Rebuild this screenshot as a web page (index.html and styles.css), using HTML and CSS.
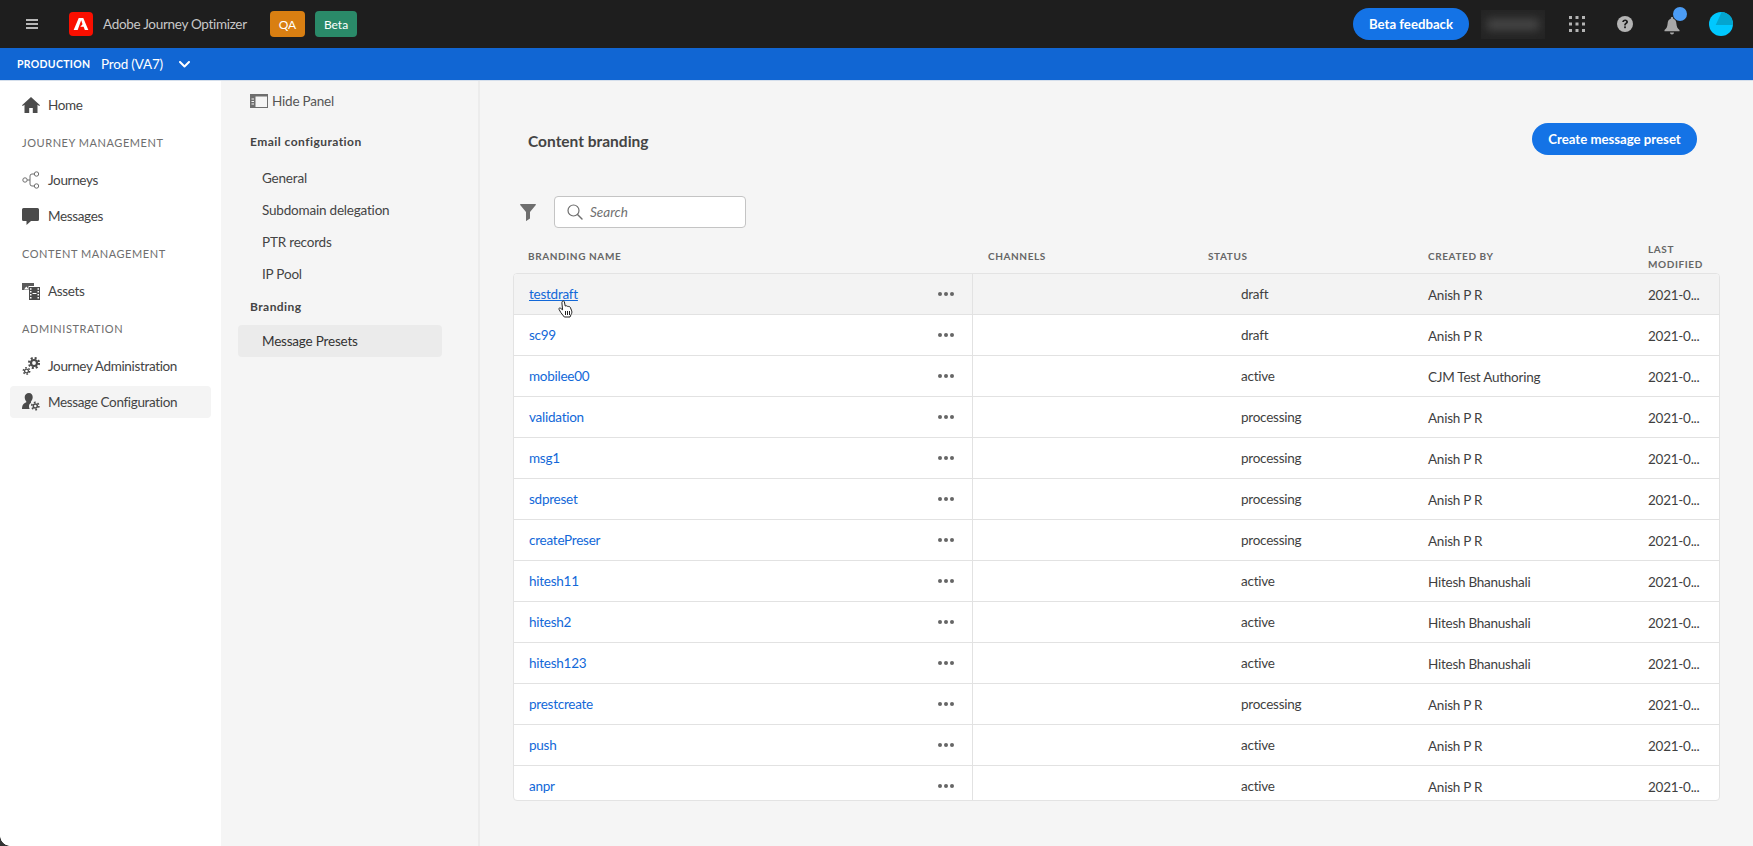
FILE: index.html
```html
<!DOCTYPE html>
<html lang="en">
<head>
<meta charset="utf-8">
<title>Adobe Journey Optimizer</title>
<link rel="stylesheet" href="styles.css">
</head>
<body>
<header class="topbar">
  <svg class="burger" viewBox="0 0 12 10" width="12" height="10"><path d="M0 0h12v2H0zM0 4h12v2H0zM0 8h12v2H0z" fill="#b8b8b8"/></svg>
  <div class="logo"><svg viewBox="0 0 24 24" width="16" height="16"><path d="M8.600 3h6.800L23 21h-5.200l-1.900-5h-5l3.400-3.600-2-6.100L7 21H1z" fill="#fff"/></svg></div>
  <span class="appname">Adobe Journey Optimizer</span>
  <span class="tag tag-qa">QA</span>
  <span class="tag tag-beta">Beta</span>
  <span class="spacer"></span>
  <button class="pill feedback">Beta feedback</button>
  <div class="blurred"><div class="blurred-ink"></div></div>
  <svg class="ic-apps" viewBox="0 0 16 16" width="16" height="16"><g fill="#b4b4b4"><rect width="3" height="3"/><rect x="6.500" width="3" height="3"/><rect x="13" width="3" height="3"/><rect y="6.500" width="3" height="3"/><rect x="6.500" y="6.500" width="3" height="3"/><rect x="13" y="6.500" width="3" height="3"/><rect y="13" width="3" height="3"/><rect x="6.500" y="13" width="3" height="3"/><rect x="13" y="13" width="3" height="3"/></g></svg>
  <svg class="ic-help" viewBox="0 0 16 16" width="16" height="16"><circle cx="8" cy="8" r="8" fill="#b4b4b4"/><path d="M5.200 6.100C5.300 4.400 6.500 3.400 8.200 3.400c1.700 0 2.800 1 2.800 2.300 0 1-.5 1.600-1.300 2.200-.7.500-.9.800-.9 1.500H7.200c-.1-1.100.3-1.800 1-2.300.6-.5.9-.8.9-1.300 0-.5-.4-.9-1-.9-.7 0-1.100.4-1.200 1.200z" fill="#1e1e1e"/><rect x="7.100" y="10.300" width="1.800" height="1.900" rx=".4" fill="#1e1e1e"/></svg>
  <div class="bell-wrap">
    <svg viewBox="0 0 16 18" width="16" height="18"><path d="M8 0c.7 0 1.200.5 1.200 1.200v.6c2.300.6 3 2.600 3.200 5 .3 3 1 4.800 3.100 6.200v1.300H.5V13c2.100-1.400 2.800-3.200 3.100-6.200.2-2.400.9-4.400 3.200-5v-.6C6.800.5 7.300 0 8 0zM6 15.500h4c0 1.300-.8 2-2 2s-2-.7-2-2z" fill="#a8a8a8"/></svg>
    <span class="bell-dot"></span>
  </div>
  <svg class="avatar" viewBox="0 0 24 24" width="24" height="24"><circle cx="12" cy="12" r="12" fill="#00c8ff"/><path d="M6.700 13L12.700 0A12 12 0 0 1 24 13z" fill="#04a5cf"/></svg>
</header>
<div class="orgbar">
  <span class="org-label">PRODUCTION</span>
  <span class="org-name">Prod (VA7)</span>
  <svg viewBox="0 0 11 7" width="11" height="7"><path d="M1 1l4.500 4.500L10 1" fill="none" stroke="#fff" stroke-width="2" stroke-linecap="round" stroke-linejoin="round"/></svg>
</div>
<div class="shell">
  <nav class="sidenav">
    <a class="nav-item"><svg class="nav-ic" viewBox="0 0 18 16" width="18" height="16"><path d="M9 0l9 8.200-.8.900L15.500 7.700V16h-4.700v-5H7.200v5H2.500V7.700L.8 9.100 0 8.200z" fill="#4b4b4b"/></svg>Home</a>
    <div class="nav-head">JOURNEY MANAGEMENT</div>
    <a class="nav-item"><svg class="nav-ic" viewBox="0 0 18 18" width="18" height="18"><g fill="none" stroke="#6e6e6e" stroke-width="1"><circle cx="3" cy="9" r="2.200"/><circle cx="14.500" cy="3" r="2.200"/><circle cx="14.500" cy="15" r="2.200"/><path d="M5.200 9H8M12.300 3H10a2 2 0 0 0-2 2v8a2 2 0 0 0 2 2h2.300"/></g></svg>Journeys</a>
    <a class="nav-item"><svg class="nav-ic" viewBox="0 0 18 17" width="18" height="17"><path d="M1.500 0h14A1.500 1.500 0 0 1 17 1.500v10a1.500 1.500 0 0 1-1.500 1.500H9l-4.500 4V13h-3A1.500 1.500 0 0 1 0 11.500v-10A1.500 1.500 0 0 1 1.500 0z" fill="#4b4b4b"/></svg>Messages</a>
    <div class="nav-head">CONTENT MANAGEMENT</div>
    <a class="nav-item"><svg class="nav-ic" viewBox="0 0 18 17" width="18" height="17"><path d="M0 0h12v3H6.500v4H0z" fill="#5a5a5a"/><path d="M2 6.500l2.300-3 1.700 2v1z" fill="#fff"/><path d="M7 4h11v13H7z" fill="#4b4b4b"/><path d="M8 5.200h1.500v1.600H8zM15.500 5.200H17v1.600h-1.500zM8 8h1.500v1.600H8zM15.500 8H17v1.600h-1.500zM8 11h1.500v1.600H8zM15.500 11H17v1.600h-1.500zM8 14h1.500v1.600H8zM15.500 14H17v1.600h-1.500zM10.500 10h4v1h-4z" fill="#fff"/></svg>Assets</a>
    <div class="nav-head">ADMINISTRATION</div>
    <a class="nav-item"><svg class="nav-ic" viewBox="0 0 18 18" width="18" height="18"><g fill="none" stroke="#4b4b4b"><circle cx="12" cy="6" r="3" stroke-width="2.200"/><circle cx="12" cy="6" r="5" stroke-width="2.200" stroke-dasharray="2 1.930"/><circle cx="4.500" cy="14" r="1.900" stroke-width="1.300"/><circle cx="4.500" cy="14" r="3.200" stroke-width="1.500" stroke-dasharray="1.600 1.750"/></g></svg>Journey Administration</a>
    <a class="nav-item is-current"><svg class="nav-ic" viewBox="0 0 18 18" width="18" height="18"><path d="M7 0c2.300 0 3.700 1.800 3.700 4.100 0 1.700-.7 3.300-1.700 4.300v1.400c-1.300.8-2 2-2 3.700 0 .9.200 1.700.7 2.500H0c0-3.300.8-5 2.800-6.100l1.500-.7V8.400C3.300 7.400 2.700 5.800 2.700 4.100 2.700 1.800 4.500 0 7 0z" fill="#4b4b4b"/><g fill="none" stroke="#4b4b4b"><circle cx="13.300" cy="13" r="2" stroke-width="1.500"/><circle cx="13.300" cy="13" r="3.600" stroke-width="1.600" stroke-dasharray="1.800 1.970"/></g></svg>Message Configuration</a>
  </nav>
  <aside class="panel">
    <div class="hide-panel"><svg viewBox="0 0 18 14" width="18" height="14"><rect x=".5" y=".5" width="17" height="13" fill="none" stroke="#6e6e6e"/><path d="M0 0h18v2.500H0zM0 0h5.500v14H0z" fill="#6e6e6e"/><path d="M1.500 4.500h2.500v1H1.500zM1.500 7h2.500v1H1.500zM1.500 9.500h2.500v1H1.500z" fill="#f5f5f5"/></svg>Hide Panel</div>
    <div class="panel-head panel-head-first">Email configuration</div>
    <a class="panel-item">General</a>
    <a class="panel-item">Subdomain delegation</a>
    <a class="panel-item">PTR records</a>
    <a class="panel-item">IP Pool</a>
    <div class="panel-head">Branding</div>
    <a class="panel-item is-current">Message Presets</a>
  </aside>
  <main class="content">
    <div class="title-row">
      <h1>Content branding</h1>
      <button class="pill create">Create message preset</button>
    </div>
    <div class="filter-row">
      <svg class="filter-ic" viewBox="0 0 16 17" width="16" height="17"><path d="M.5 0h15l.5.800L10 8v6.500L6.200 17H6V8L0 .8z" fill="#6e6e6e"/></svg>
      <div class="search">
        <svg viewBox="0 0 16 16" width="16" height="16"><circle cx="6.500" cy="6.500" r="5.500" fill="none" stroke="#6e6e6e" stroke-width="1.200"/><path d="M10.500 10.500L15 15" stroke="#6e6e6e" stroke-width="1.400" stroke-linecap="round"/></svg>
        <span>Search</span>
      </div>
    </div>
    <div class="thead">
      <div class="th">BRANDING NAME</div>
      <div class="th">CHANNELS</div>
      <div class="th">STATUS</div>
      <div class="th">CREATED BY</div>
      <div class="th">LAST<br>MODIFIED</div>
    </div>
    <div class="table">
      <div class="row is-hover"><a class="name"><span>testdraft</span><i class="dots"></i></a><div class="chan"></div><div class="status">draft</div><div class="by">Anish P R</div><div class="mod">2021-0...</div></div>
      <div class="row"><a class="name"><span>sc99</span><i class="dots"></i></a><div class="chan"></div><div class="status">draft</div><div class="by">Anish P R</div><div class="mod">2021-0...</div></div>
      <div class="row"><a class="name"><span>mobilee00</span><i class="dots"></i></a><div class="chan"></div><div class="status">active</div><div class="by">CJM Test Authoring</div><div class="mod">2021-0...</div></div>
      <div class="row"><a class="name"><span>validation</span><i class="dots"></i></a><div class="chan"></div><div class="status">processing</div><div class="by">Anish P R</div><div class="mod">2021-0...</div></div>
      <div class="row"><a class="name"><span>msg1</span><i class="dots"></i></a><div class="chan"></div><div class="status">processing</div><div class="by">Anish P R</div><div class="mod">2021-0...</div></div>
      <div class="row"><a class="name"><span>sdpreset</span><i class="dots"></i></a><div class="chan"></div><div class="status">processing</div><div class="by">Anish P R</div><div class="mod">2021-0...</div></div>
      <div class="row"><a class="name"><span>createPreser</span><i class="dots"></i></a><div class="chan"></div><div class="status">processing</div><div class="by">Anish P R</div><div class="mod">2021-0...</div></div>
      <div class="row"><a class="name"><span>hitesh11</span><i class="dots"></i></a><div class="chan"></div><div class="status">active</div><div class="by">Hitesh Bhanushali</div><div class="mod">2021-0...</div></div>
      <div class="row"><a class="name"><span>hitesh2</span><i class="dots"></i></a><div class="chan"></div><div class="status">active</div><div class="by">Hitesh Bhanushali</div><div class="mod">2021-0...</div></div>
      <div class="row"><a class="name"><span>hitesh123</span><i class="dots"></i></a><div class="chan"></div><div class="status">active</div><div class="by">Hitesh Bhanushali</div><div class="mod">2021-0...</div></div>
      <div class="row"><a class="name"><span>prestcreate</span><i class="dots"></i></a><div class="chan"></div><div class="status">processing</div><div class="by">Anish P R</div><div class="mod">2021-0...</div></div>
      <div class="row"><a class="name"><span>push</span><i class="dots"></i></a><div class="chan"></div><div class="status">active</div><div class="by">Anish P R</div><div class="mod">2021-0...</div></div>
      <div class="row row-last"><a class="name"><span>anpr</span><i class="dots"></i></a><div class="chan"></div><div class="status">active</div><div class="by">Anish P R</div><div class="mod">2021-0...</div></div>
      <svg class="cursor" viewBox="0 0 16 18" width="16" height="18"><path d="M4.500 1.200c.8-.7 1.700-.2 1.900.7l.8 4.100 1-.2c.5-.1 1 .1 1.200.5.500-.2 1.100-.1 1.400.4.600-.2 1.200 0 1.500.6l1.400 3.600c.4 1.300.1 2.600-.6 3.600L12 17H6.300L2.800 12.500 1 9.300c-.4-.8.500-1.700 1.300-1.200l2.300 1.700L3.900 2.800c0-.6.200-1.200.6-1.600z" fill="#fff" stroke="#222" stroke-width="1"/><path d="M7.500 11v4M9.500 11v4M11.500 11v4" stroke="#222" stroke-width="1"/></svg>
    </div>
  </main>
</div>
<div class="window-corner"></div>
</body>
</html>
```
FILE: styles.css
```css
* { box-sizing: border-box; }
html, body { margin: 0; height: 100%; overflow: hidden; }
body { font-family: "Lato", "Noto Sans", sans-serif; font-size: 13.5px; color: #2c2c2c; background: #f5f5f5; }
a { color: inherit; text-decoration: none; }
button { font-family: inherit; border: 0; }

.topbar { height: 48px; background: #1e1e1e; display: flex; align-items: center; padding-left: 26px; color: #d0d0d0; }
.burger { margin-right: 31px; }
.logo { width: 24px; height: 24px; border-radius: 4px; background: #fa0f00; display: flex; align-items: center; justify-content: center; margin-right: 10px; }
.appname { font-size: 13.5px; letter-spacing: -.3px; color: #c8c8c8; margin-right: 23px; width: 144px; white-space: nowrap; }
.tag { height: 26px; border-radius: 4px; color: #fff; font-size: 12px; display: flex; align-items: center; justify-content: center; }
.tag-qa { width: 35px; background: #d97f12; margin-right: 10px; }
.tag-beta { width: 42px; background: #2a8a69; }
.spacer { flex: 1; }
.pill { border-radius: 16px; height: 32px; background: #1473e6; color: #fff; font-size: 13.2px; font-weight: 700; white-space: nowrap; padding: 0; }
.feedback { width: 116px; margin-right: 12px; }
.blurred { width: 64px; height: 29px; background: #242424; display: flex; align-items: center; justify-content: center; margin-right: 24px; overflow: hidden; }
.blurred-ink { width: 52px; height: 11px; background: #484848; filter: blur(5px); }
.ic-apps { margin-right: 32px; }
.ic-help { margin-right: 31px; }
.bell-wrap { position: relative; width: 16px; height: 18px; margin-right: 29px; margin-top: 3px; }
.bell-wrap svg { display: block; }
.bell-dot { position: absolute; left: 9px; top: -10px; width: 14px; height: 14px; border-radius: 50%; background: #4b9cf5; }
.avatar { margin-right: 20px; }

.orgbar { height: 33px; background: #1166d3; color: #fff; display: flex; align-items: center; padding-left: 17px; border-bottom: 1px solid #d5dfec; }
.org-label { font-size: 10.5px; font-weight: 700; letter-spacing: .3px; width: 84px; white-space: nowrap; }
.org-name { font-size: 13.5px; letter-spacing: -.2px; width: 78px; white-space: nowrap; }

.shell { display: flex; height: calc(100% - 81px); }
.sidenav { width: 221px; flex: none; background: #fff; padding: 8px 10px 0; }
.nav-item { display: flex; align-items: center; height: 32px; padding-left: 12px; margin-bottom: 4px; border-radius: 4px; color: #444; font-size: 13.5px; letter-spacing: -.35px; white-space: nowrap; }
.nav-ic { flex: none; width: 18px; margin-right: 8px; }
.nav-item.is-current { background: #f4f4f4; }
.nav-head { height: 21px; margin: 11px 0 11px 12px; font-size: 11px; line-height: 21px; letter-spacing: .55px; color: #6e6e6e; white-space: nowrap; }

.panel { width: 259px; flex: none; background: #f5f5f5; border-right: 2px solid #ececec; padding: 10px 36px 0 17px; }
.hide-panel { display: flex; align-items: center; gap: 4px; height: 20px; margin-left: 12px; color: #555; font-size: 13.5px; letter-spacing: -.2px; white-space: nowrap; }
.panel-head { margin: 9px 0 10px 12px; height: 16px; line-height: 16px; font-size: 12px; font-weight: 700; letter-spacing: .45px; color: #444; white-space: nowrap; }
.panel-head-first { margin-top: 23px; margin-bottom: 12px; }
.panel-item { display: flex; align-items: center; height: 32px; padding-left: 24px; border-radius: 4px; font-size: 13.5px; letter-spacing: -.2px; color: #444; white-space: nowrap; }
.panel-item.is-current { background: #ebebeb; color: #333; margin-top: 1px; }

.content { flex: 1; min-width: 0; padding: 42px 33px 0; }
.title-row { display: flex; align-items: center; justify-content: space-between; height: 32px; padding: 0 23px 0 15px; }
h1 { margin: 0; padding-top: 3px; font-size: 15.5px; font-weight: 700; color: #444; }
.create { width: 165px; }
.filter-row { display: flex; align-items: center; gap: 18px; height: 32px; margin-top: 41px; padding-left: 7px; }
.filter-ic { display: block; }
.search { width: 192px; height: 32px; border: 1px solid #c4c4c4; border-radius: 4px; background: #fff; display: flex; align-items: center; gap: 7px; padding-left: 12px; }
.search span { font-style: italic; font-size: 13.5px; color: #707070; }

.thead { display: grid; grid-template-columns: 460px 220px 220px 220px 1fr; height: 45px; align-items: center; padding-top: 12px; }
.th { font-size: 10px; font-weight: 700; letter-spacing: .6px; line-height: 15px; color: #666; padding-left: 15px; white-space: nowrap; }

.table { position: relative; border: 1px solid #e3e3e3; border-radius: 4px; background: #fff; height: 528px; overflow: hidden; }
.row { display: grid; grid-template-columns: 459px 220px 220px 220px 1fr; height: 41px; border-bottom: 1px solid #e2e2e2; align-items: center; font-size: 13.5px; letter-spacing: -.25px; color: #3f3f3f; }
.row-last { border-bottom: 0; height: 37px; }
.row.is-hover { background: #f3f3f3; }
.name { align-self: start; display: flex; align-items: center; justify-content: space-between; height: 41px; padding: 0 18px 1px 15px; color: #1268d8; border-right: 1px solid #e2e2e2; }
.is-hover .name span { text-decoration: underline; }
.dots { display: block; width: 4px; height: 4px; border-radius: 50%; background: #666; margin-right: 6px; box-shadow: 6px 0 0 #666, -6px 0 0 #666; }
.status { padding-left: 48px; position: relative; top: -1px; }
.chan { height: 100%; }
.by { padding-left: 15px; white-space: nowrap; }
.mod { padding-left: 15px; white-space: nowrap; }
.cursor { position: absolute; left: 44px; top: 26px; }

.window-corner { position: absolute; left: 0; bottom: 0; width: 10px; height: 10px; background: radial-gradient(circle at 100% 0, transparent 9.500px, #333 10px); }
```
